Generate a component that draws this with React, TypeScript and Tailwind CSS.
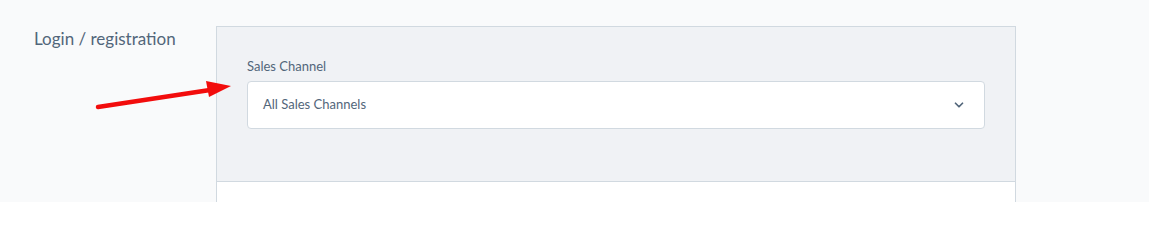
import { ChevronDown } from 'lucide-react';

const font = { fontFamily: 'Lato, "Noto Sans", sans-serif' };

const App = () => {
  return (
    <div className="relative w-full h-[202px] overflow-hidden bg-[#f9fafb] flex" style={font}>
      <div className="w-[216px] shrink-0 pl-[34px] pt-[28px]">
        <h3 className="text-[17px] leading-[22px] text-[#52667a]">Login / registration</h3>
      </div>

      <div className="w-[800px] shrink-0 mt-[26px] border border-[#d1d9e0] border-b-0 flex flex-col">
        <div className="bg-[#f0f2f5] border-b border-[#d1d9e0] h-[155px] px-[30px] pt-[30px]">
          <label className="block text-[13px] leading-[18px] text-[#52667a] mb-[6px]">Sales Channel</label>
          <div className="h-[48px] bg-white border border-[#d1d9e0] rounded-[4px] flex items-center justify-between pl-[15px] pr-[18px]">
            <span className="text-[13px] text-[#52667a]">All Sales Channels</span>
            <ChevronDown className="w-[14px] h-[14px] text-[#52667a]" strokeWidth={3} />
          </div>
        </div>
        <div className="flex-1 bg-white" />
      </div>

      {/* annotation arrow */}
      <svg className="absolute left-0 top-0 pointer-events-none" width="1149" height="202">
        <line x1="98" y1="107" x2="210" y2="90" stroke="#f20c0c" strokeWidth="4.5" strokeLinecap="round" />
        <polygon points="206,81 231,86 209,97" fill="#f20c0c" />
      </svg>
    </div>
  );
};

export default App;
